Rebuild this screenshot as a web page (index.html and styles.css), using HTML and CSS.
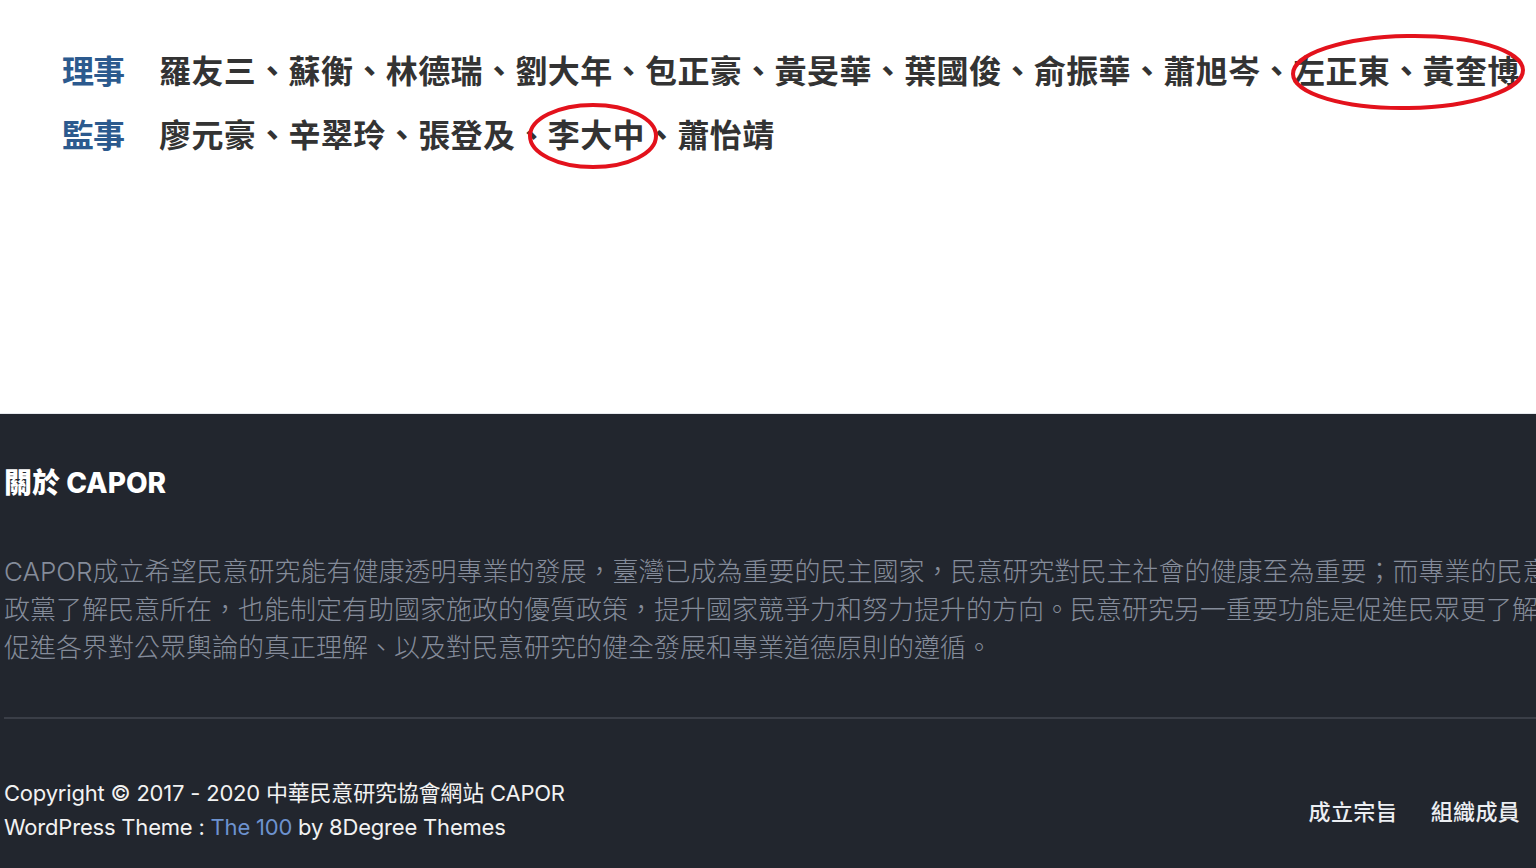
FILE: index.html
```html
<!DOCTYPE html>
<html lang="zh-Hant">
<head>
    <meta charset="UTF-8">
    <meta name="viewport" content="width=device-width, initial-scale=1.0">
    <title>組織成員 - 中華民意研究協會網站 CAPOR</title>
    <link rel="stylesheet" href="styles.css">
</head>
<body>
    <section class="board">
        <div class="board-row">
            <span class="board-label">理事</span>
            <span class="board-names">羅友三、蘇衡、林德瑞、劉大年、包正豪、黃旻華、葉國俊、俞振華、蕭旭岑、左正東、黃奎博</span>
        </div>
        <div class="board-row">
            <span class="board-label">監事</span>
            <span class="board-names">廖元豪、辛翠玲、張登及、李大中、蕭怡靖</span>
        </div>
        <svg class="marks" width="1536" height="200" viewBox="0 0 1536 200">
            <ellipse cx="1408" cy="72" rx="115" ry="36" transform="rotate(-1 1408 72)"></ellipse>
            <ellipse cx="593" cy="136" rx="63" ry="31"></ellipse>
        </svg>
    </section>

    <footer class="site-footer">
        <div class="footer-widget">
            <h3 class="widget-title">關於 CAPOR</h3>
            <p class="widget-text">CAPOR成立希望民意研究能有健康透明專業的發展，臺灣已成為重要的民主國家，民意研究對民主社會的健康至為重要；而專業的民意研究可以讓政府及<br>政黨了解民意所在，也能制定有助國家施政的優質政策，提升國家競爭力和努力提升的方向。民意研究另一重要功能是促進民眾更了解社會的脈動，<br>促進各界對公眾輿論的真正理解、以及對民意研究的健全發展和專業道德原則的遵循。</p>
        </div>
        <div class="footer-bottom">
            <div class="copyright">
                <div>Copyright © 2017 - 2020 中華民意研究協會網站 CAPOR</div>
                <div>WordPress Theme : <a href="#">The 100</a> by 8Degree Themes</div>
            </div>
            <nav class="footer-menu">
                <a href="#">成立宗旨</a>
                <a href="#">組織成員</a>
            </nav>
        </div>
    </footer>
</body>
</html>
```

FILE: styles.css
```css
html, body {
    margin: 0;
    padding: 0;
}
body {
    width: 1536px;
    height: 868px;
    overflow: hidden;
    background: #fff;
    font-family: Inter, "Noto Sans CJK TC", sans-serif;
}
a { text-decoration: none; }

.board {
    position: relative;
    height: 375px;
    padding: 38px 0 0 62px;
    font-family: "Noto Sans CJK TC", sans-serif;
    font-weight: 700;
    font-size: 32px;
}
.board-row {
    display: flex;
    gap: 35px;
    height: 65px;
    line-height: 65px;
    margin-top: -1px;
    white-space: nowrap;
}
.board-label {
    color: #2c5a8e;
    letter-spacing: -1px;
}
.board-names {
    color: #333;
    letter-spacing: 0.4px;
}
.marks {
    position: absolute;
    top: 0;
    left: 0;
    pointer-events: none;
}
.marks ellipse {
    fill: none;
    stroke: #e3121c;
    stroke-width: 4;
}

.site-footer {
    height: 455px;
    box-sizing: border-box;
    background: #22262e;
    border-top: 1px solid #e6e9ee;
    padding: 49px 0 0 4px;
    overflow: hidden;
}
.widget-title {
    margin: 0;
    color: #fff;
    font-size: 28px;
    font-weight: 800;
    line-height: 40px;
}
.widget-text {
    margin: 50px 0 0;
    width: 1800px;
    color: #858c9a;
    font-size: 26px;
    font-weight: 300;
    line-height: 38px;
    white-space: nowrap;
}
.footer-bottom {
    display: flex;
    align-items: center;
    justify-content: space-between;
    margin-top: 50px;
    border-top: 2px solid #3a3e47;
    padding: 57px 16px 22px 0;
}
.copyright {
    color: #f2f2f2;
    font-size: 22px;
    line-height: 34px;
    letter-spacing: -0.2px;
}
.copyright a { color: #6d92cf; }
.footer-menu {
    display: flex;
    gap: 33px;
}
.footer-menu a {
    color: #eceef2;
    font-size: 22px;
    font-weight: 500;
    font-family: "Noto Sans CJK TC", sans-serif;
    letter-spacing: 0.3px;
}
```
